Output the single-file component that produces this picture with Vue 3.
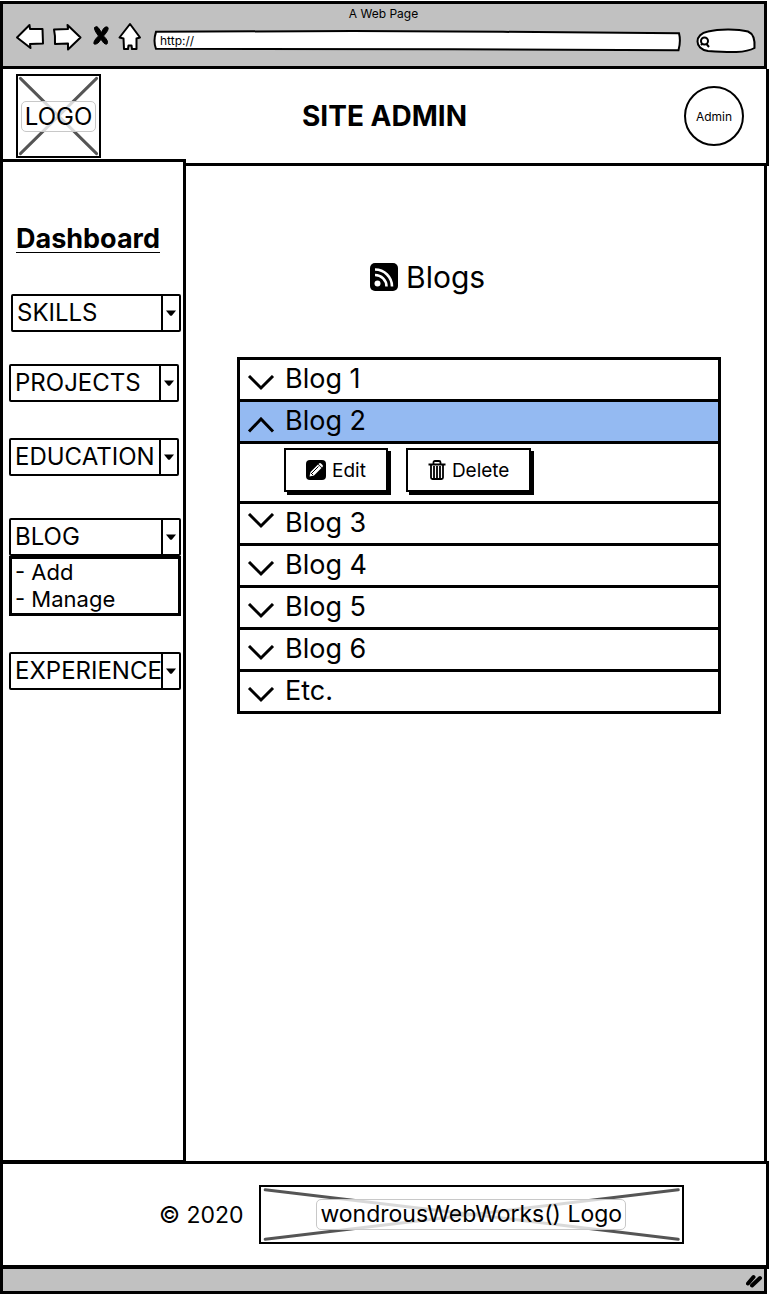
<script setup>
import { ref } from 'vue'

const menus = [
  { id: 'skills', label: 'SKILLS' },
  { id: 'projects', label: 'PROJECTS' },
  { id: 'education', label: 'EDUCATION' },
  { id: 'blog', label: 'BLOG', items: ['Add', 'Manage'] },
  { id: 'experience', label: 'EXPERIENCE' },
]

const blogs = [
  { title: 'Blog 1' },
  { title: 'Blog 2' },
  { title: 'Blog 3', raised: true },
  { title: 'Blog 4' },
  { title: 'Blog 5' },
  { title: 'Blog 6' },
  { title: 'Etc.' },
]

const open = ref('Blog 2')
const address = ref('http://')
const toggle = (title) => {
  open.value = open.value === title ? '' : title
}
</script>

<template>
  <div class="page">
    <div class="chrome">
      <div class="page-title">A Web Page</div>
      <div class="toolbar">
        <button class="nav" type="button" aria-label="Back">
          <svg width="27" height="28" viewBox="0 0 27 28"><path d="M1 13.500 13.500 1 14 5 26.500 5 27 19.500 14 20 14.500 24 Z" /></svg>
        </button>
        <button class="nav" type="button" aria-label="Forward">
          <svg width="28" height="28" viewBox="0 0 28 28"><path d="M1 5.500 15 5 14.500 1 27.500 13.500 15 25.500 15 19.500 2 20 Q2.500 12 1 5.500 Z" /></svg>
        </button>
        <button class="nav" type="button" aria-label="Stop">
          <svg width="18" height="28" viewBox="0 0 18 28"><path class="solid" d="M3.500 3.500Q6 1.500 7.500 4L10.500 8.500Q13 2 16.500 3Q19 5 12.500 12Q18 17 16 20Q13 21 10 15Q7 21 3 20Q2 17 7.500 12Q3 6 3.500 3.500Z" /></svg>
        </button>
        <button class="nav" type="button" aria-label="Home">
          <svg width="24" height="28" viewBox="0 0 24 28"><path d="M11 0 0.500 13.500 4.500 14.500 5 25 9 25 9.500 21.500 12.500 21.500 13 25 17.500 25 17.500 14.500 21 13.500 Z" /></svg>
        </button>
        <label class="address">
          <svg class="outline" viewBox="0 0 528 24" preserveAspectRatio="none"><path d="M3 2 L200 1 L350 2 L526 3.500 Q528 12 525.500 22 L300 21 L3 20.500 Q0 12 3 2Z" /></svg>
          <input v-model="address" type="text" aria-label="Address" />
        </label>
        <label class="search">
          <svg class="outline" viewBox="0 0 60 26" preserveAspectRatio="none"><path d="M12 3.500 C24 0.500 42 1 52 3.500 C58 6 59 13 58.500 20 C50 25 34 24.500 12 23 C-2 21 -2 6 12 3.500Z" /></svg>
          <svg class="lens" width="12" height="12" viewBox="0 0 12 12"><circle cx="5.500" cy="5" r="3.500" /><path d="M2 9 3.500 7.500M7.500 8 10 11" /></svg>
          <input type="search" aria-label="Search" />
        </label>
      </div>
    </div>

    <header class="header">
      <a class="placeholder logo" href="#">
        <svg viewBox="0 0 100 100" preserveAspectRatio="none"><path d="M3 3 97 97M97 3 3 97" /></svg>
        <span>LOGO</span>
      </a>
      <h1>SITE ADMIN</h1>
      <button class="avatar" type="button">Admin</button>
    </header>

    <div class="body">
      <aside class="sidebar">
        <h2>Dashboard</h2>
        <div v-for="menu in menus" :key="menu.id" class="menu" :class="menu.id">
          <div class="combo">
            <select :aria-label="menu.label">
              <option>{{ menu.label }}</option>
            </select>
            <span class="arrow"><svg width="10" height="6" viewBox="0 0 10 6"><path d="M0 0.500H10L6 5.500Q5 6 4 5.500Z" /></svg></span>
          </div>
          <ul v-if="menu.items">
            <li v-for="item in menu.items" :key="item"><a href="#">- {{ item }}</a></li>
          </ul>
        </div>
      </aside>

      <main class="main">
        <h2 class="heading">
          <svg width="28" height="28" viewBox="0 0 28 28">
            <rect width="28" height="28" rx="5" />
            <g fill="none" stroke="#fff" stroke-width="2.600">
              <path d="M5 6.500A17 17 0 0 1 22 23.500M5 12A11.500 11.500 0 0 1 16.500 23.500" />
            </g>
            <circle cx="7.500" cy="20.500" r="3" fill="#fff" />
          </svg>
          <span>Blogs</span>
        </h2>

        <ul class="accordion">
          <li v-for="blog in blogs" :key="blog.title">
            <button class="row" :class="{ active: open === blog.title }" type="button" :aria-expanded="open === blog.title" @click="toggle(blog.title)">
              <svg class="chevron" :class="{ raised: blog.raised }" width="28" height="16" viewBox="0 0 28 16">
                <path :d="open === blog.title ? 'M2 14.5 14 2 26 14.5' : 'M2 1 14 13 26 1'" />
              </svg>
              <span>{{ blog.title }}</span>
            </button>
            <div v-if="open === blog.title" class="panel">
              <button class="action" type="button">
                <svg width="20" height="20" viewBox="0 0 20 20">
                  <rect width="20" height="20" rx="4" />
                  <path d="M3.500 16.500 4.500 12 12 4.500 15.500 8 8 15.500Z" fill="#fff" />
                  <path d="M13 3.500Q14 2.500 15 3.500L16.500 5Q17.500 6 16.500 7L16 7.500 12.500 4Z" fill="#fff" />
                  <path d="M6 13 12.500 6.500M5 13 7 15" fill="none" stroke="#000" stroke-width="1" />
                </svg>
                Edit
              </button>
              <button class="action" type="button">
                <svg width="18" height="20" viewBox="0 0 18 20">
                  <path d="M0.500 4.500H17.500M5.500 4V2.500Q5.500 1 7 1H11Q12.500 1 12.500 2.500V4M3 5V17.500Q3 19 4.500 19H13.500Q15 19 15 17.500V5M6 6V18M9 6V18M12 6V18" fill="none" stroke="#000" stroke-width="1.800" />
                </svg>
                Delete
              </button>
            </div>
          </li>
        </ul>
      </main>
    </div>

    <footer class="footer">
      <span class="copy">© 2020</span>
      <a class="placeholder brand" href="#">
        <svg viewBox="0 0 100 100" preserveAspectRatio="none"><path d="M1 5 99 95M99 5 1 95" /></svg>
        <span>wondrousWebWorks() Logo</span>
      </a>
    </footer>
    <div class="status">
      <svg width="18" height="15" viewBox="0 0 18 15"><path d="M2 10.500 7.500 4M6 12.500 14 5" /></svg>
    </div>
  </div>
</template>

<style>
body {
  margin: 0;
  background: #fff;
}
</style>

<style scoped>
.page,
.page * {
  box-sizing: border-box;
}
.page {
  display: flex;
  flex-direction: column;
  min-height: 100vh;
  padding: 1px 0;
  color: #000;
  font-family: Inter, "Liberation Sans", sans-serif;
}
button,
input,
select {
  margin: 0;
  padding: 0;
  border: 0;
  background: none;
  color: inherit;
  font: inherit;
  appearance: none;
}
a {
  color: inherit;
  text-decoration: none;
}
h1,
h2,
ul {
  margin: 0;
  padding: 0;
  list-style: none;
}
svg {
  display: block;
  flex: none;
}

.chrome {
  margin-right: 2px;
  border: 3px solid #000;
  background: #c1c1c1;
}
.page-title {
  font-size: 12px;
  line-height: 20px;
  text-align: center;
}
.toolbar {
  display: flex;
  align-items: flex-start;
  gap: 10px;
  height: 42px;
  padding: 0 8px 0 13px;
}
.nav path {
  fill: #fff;
  stroke: #000;
  stroke-width: 2;
  stroke-linejoin: round;
}
.nav .solid {
  fill: #000;
  stroke-width: 1;
}
.nav svg {
  overflow: visible;
}
.address,
.search {
  position: relative;
  display: flex;
  align-items: center;
}
.address {
  flex: 1;
  height: 22px;
  margin-top: 6px;
}
.search {
  width: 60px;
  height: 26px;
  margin: 4px 0 0 5px;
}
.address input,
.search input {
  position: relative;
  width: 100%;
  padding-left: 7px;
  font-size: 12px;
  line-height: 16px;
}
.search input {
  padding-left: 18px;
}
.outline {
  position: absolute;
  inset: 0;
  width: 100%;
  height: 100%;
  overflow: visible;
}
.outline path {
  fill: #fff;
  stroke: #000;
  stroke-width: 2;
  vector-effect: non-scaling-stroke;
}
.lens {
  position: absolute;
  left: 3px;
  top: 8px;
}
.lens * {
  fill: none;
  stroke: #000;
  stroke-width: 2;
}

.header {
  display: grid;
  grid-template-columns: 1fr auto 1fr;
  align-items: center;
  height: 97px;
  padding: 0 22px 0 13px;
  border: solid #000;
  border-width: 0 3px 3px;
}
.header h1 {
  margin-left: 9px;
  font-size: 28px;
  line-height: 32px;
}
.placeholder {
  position: relative;
  display: flex;
  align-items: center;
  justify-content: center;
  border: 2px solid #000;
  font-size: 24px;
  line-height: 29px;
}
.placeholder svg {
  position: absolute;
  inset: 0;
  width: 100%;
  height: 100%;
}
.placeholder path {
  fill: none;
  stroke: #555;
  stroke-width: 3;
  stroke-linecap: round;
  vector-effect: non-scaling-stroke;
}
.placeholder span {
  position: relative;
  padding: 0 3px;
  border: 1px solid #c8c8c8;
  border-radius: 5px;
  background: rgba(255, 255, 255, 0.78);
}
.logo {
  width: 85px;
  height: 84px;
}
.avatar {
  justify-self: end;
  width: 60px;
  height: 60px;
  border: 2px solid #000;
  border-radius: 50%;
  font-size: 12px;
}

.body {
  display: flex;
  flex: 1;
  margin-right: 2px;
}
.sidebar {
  position: relative;
  width: 186px;
  margin: -7px 0 -2px;
  padding: 64px 2px 0 6px;
  border: 3px solid #000;
  background: #fff;
}
.sidebar h2 {
  width: fit-content;
  margin: 0 0 41px 7px;
  border-bottom: 1px solid #000;
  font-size: 27px;
  line-height: 26px;
}
.menu {
  margin-top: 36px;
  font-size: 24px;
}
.menu.skills {
  margin: 0 0 0 2px;
}
.menu.projects {
  margin: 32px 2px 0 0;
}
.menu.education {
  margin-right: 2px;
}
.menu.blog {
  margin-top: 42px;
}
.combo {
  display: flex;
  height: 38px;
  border: 2px solid #000;
  border-radius: 2px;
}
.combo select {
  flex: 1;
  min-width: 0;
  padding: 0 0 2px 4px;
  overflow: hidden;
  text-overflow: clip;
}
.arrow {
  display: flex;
  align-items: center;
  justify-content: center;
  width: 18px;
  border-left: 2px solid #000;
}
.menu ul {
  padding: 0 3px;
  border: 3px solid #000;
  font-size: 22px;
  line-height: 27px;
}

.main {
  flex: 1;
  min-width: 0;
  padding: 93px 43px 40px 51px;
  border-right: 3px solid #000;
}
.heading {
  display: flex;
  align-items: center;
  gap: 8px;
  margin: 0 0 62px 133px;
  font-size: 30px;
  font-weight: 400;
  line-height: 36px;
}
.accordion {
  border: solid #000;
  border-width: 0 3px 3px;
}
.row {
  display: flex;
  gap: 10px;
  width: 100%;
  height: 42px;
  padding-left: 7px;
  border-top: 3px solid #000;
  font-size: 27px;
  line-height: 38px;
  text-align: left;
}
.row.active {
  background: #94baf2;
}
.chevron {
  align-self: center;
  margin-top: 6px;
}
.chevron.raised {
  margin-top: 0;
  margin-bottom: 6px;
}
.chevron path {
  fill: none;
  stroke: #000;
  stroke-width: 3;
}
.panel {
  display: flex;
  gap: 18px;
  height: 60px;
  padding: 4px 0 0 44px;
  border-top: 3px solid #000;
}
.action {
  display: flex;
  align-items: center;
  gap: 6px;
  height: 44px;
  padding: 0 20px;
  border: 2px solid #000;
  background: #fff;
  box-shadow: 3px 3px 0 #000;
  font-size: 19px;
}

.footer {
  display: flex;
  align-items: center;
  gap: 15px;
  height: 108px;
  padding: 0 82px 0 156px;
  border: solid #000;
  border-width: 3px 3px 4px;
}
.copy {
  font-size: 23px;
  white-space: nowrap;
}
.brand {
  flex: 1;
  height: 59px;
  font-size: 23px;
}
.status {
  display: flex;
  align-items: center;
  justify-content: flex-end;
  height: 25px;
  margin-right: 2px;
  border: solid #000;
  border-width: 0 3px 3px;
  background: #c1c1c1;
}
.status path {
  fill: none;
  stroke: #000;
  stroke-width: 4;
  stroke-linecap: round;
}
</style>
